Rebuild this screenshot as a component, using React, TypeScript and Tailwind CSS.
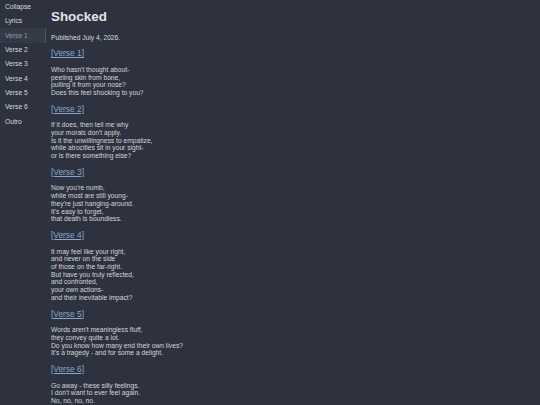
import React from "react";

const nav = ["Collapse", "Lyrics", "Verse 1", "Verse 2", "Verse 3", "Verse 4", "Verse 5", "Verse 6", "Outro"];

const verses: { title: string; lines: string[] }[] = [
  {
    title: "[Verse 1]",
    lines: [
      "Who hasn't thought about-",
      "peeling skin from bone,",
      "pulling it from your nose?",
      "Does this feel shocking to you?",
    ],
  },
  {
    title: "[Verse 2]",
    lines: [
      "If it does, then tell me why",
      "your morals don't apply.",
      "Is it the unwillingness to empatize,",
      "while atrocities sit in your sight-",
      "or is there something else?",
    ],
  },
  {
    title: "[Verse 3]",
    lines: [
      "Now you're numb,",
      "while most are still young-",
      "they're just hanging-around.",
      "It's easy to forget,",
      "that death is boundless.",
    ],
  },
  {
    title: "[Verse 4]",
    lines: [
      "It may feel like your right,",
      "and never on the side",
      "of those on the far-right.",
      "But have you truly reflected,",
      "and confronted,",
      "your own actions-",
      "and their inevitable impact?",
    ],
  },
  {
    title: "[Verse 5]",
    lines: [
      "Words aren't meaningless fluff,",
      "they convey quite a lot.",
      "Do you know how many end their own lives?",
      "It's a tragedy - and for some a delight.",
    ],
  },
  {
    title: "[Verse 6]",
    lines: [
      "Go away - these silly feelings.",
      "I don't want to ever feel again.",
      "No, no, no, no.",
    ],
  },
];

export default function App() {
  return (
    <div
      className="flex w-[540px] h-[405px] overflow-hidden bg-[#2d323e] text-[#d6d8dc]"
      style={{ fontFamily: '"Liberation Sans", Arial, sans-serif' }}
    >
      <nav className="w-[46px] shrink-0 flex flex-col pt-0 -mt-[0.4px]">
        {nav.map((n) => {
          const active = n === "Verse 1";
          return (
            <div
              key={n}
              className={
                active
                  ? "h-[14.33px] pl-[5px] flex items-center text-[6.7px] leading-[7.7px] bg-[#353a47] border-r border-[#4d5466] text-[#8d9bb2]"
                  : "h-[14.33px] pl-[5px] flex items-center text-[6.7px] leading-[7.7px] text-[#d8dadf]"
              }
            >
              {n}
            </div>
          );
        })}
      </nav>
      <main className="flex-1 pl-[5px] pt-[9px] flex flex-col">
        <h1 className="text-[13.4px] leading-[15.4px] font-bold text-[#e2e4e8]">Shocked</h1>
        <p className="mt-[9.8px] text-[6.7px] leading-[7.7px] text-[#d8dadf]">Published July 4, 2026.</p>
        {verses.map((v) => (
          <section key={v.title} className="flex flex-col">
            <a
              href="#"
              className="mt-[7.4px] text-[8.375px] leading-[9.62px] text-[#86a7d2] underline self-start"
            >
              {v.title}
            </a>
            <p className="mt-[7px] mb-[0.6px] text-[6.7px] leading-[7.7px] text-[#d4d6db]">
              {v.lines.map((l, i) => (
                <React.Fragment key={i}>
                  {l}
                  <br />
                </React.Fragment>
              ))}
            </p>
          </section>
        ))}
      </main>
    </div>
  );
}
